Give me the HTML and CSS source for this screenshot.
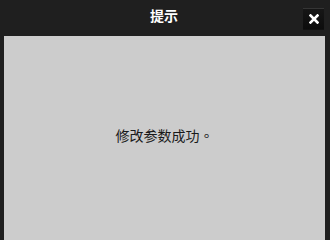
FILE: index.html
```html
<!DOCTYPE html>
<html lang="zh-CN">
<head>
<meta charset="utf-8">
<link rel="stylesheet" href="styles.css">
</head>
<body>
<div class="dialog">
  <div class="header">
    <span></span>
    <div class="title">提示</div>
    <button class="close" aria-label="关闭">
      <svg width="10" height="10" viewBox="0 0 10 10"><path d="M1.5 1.5 L8.5 8.5 M8.5 1.5 L1.5 8.5" stroke="#fff" stroke-width="2.6" stroke-linecap="square"/></svg>
    </button>
  </div>
  <div class="panel">
    <p class="message" lang="zh-TW">修改参数成功。</p>
  </div>
</div>
</body>
</html>
```
FILE: styles.css
```css
html, body {
  margin: 0;
  padding: 0;
  height: 100%;
  overflow: hidden;
  background: #1f1f1f;
  font-family: "Noto Sans CJK SC", "Noto Sans", sans-serif;
}
.dialog {
  display: flex;
  flex-direction: column;
  height: 100vh;
}
.header {
  height: 36px;
  flex: none;
  display: grid;
  grid-template-columns: 1fr auto 1fr;
  padding: 0 6px 0 4px;
}
.title {
  color: #ffffff;
  font-weight: bold;
  font-size: 14px;
  line-height: 14px;
  margin-top: 8px;
  align-self: start;
}
.close {
  justify-self: end;
  align-self: start;
  margin-top: 8px;
  width: 21px;
  height: 21px;
  padding: 0;
  border: none;
  border-top: 1px solid #353535;
  background: linear-gradient(#161616, #0c0c0c);
  box-shadow: 0 1px 0 #111;
  display: flex;
  align-items: center;
  justify-content: center;
}
.panel {
  flex: 1;
  margin: 0 5px 0 4px;
  padding-top: 91px;
  background: #cccccc;
  display: flex;
  align-items: flex-start;
  justify-content: center;
}
.message {
  margin: 0;
  font-family: "Noto Sans CJK TC", "Noto Sans CJK SC", sans-serif;
  font-size: 14px;
  line-height: 16px;
  color: #1a1a1a;
}
```
